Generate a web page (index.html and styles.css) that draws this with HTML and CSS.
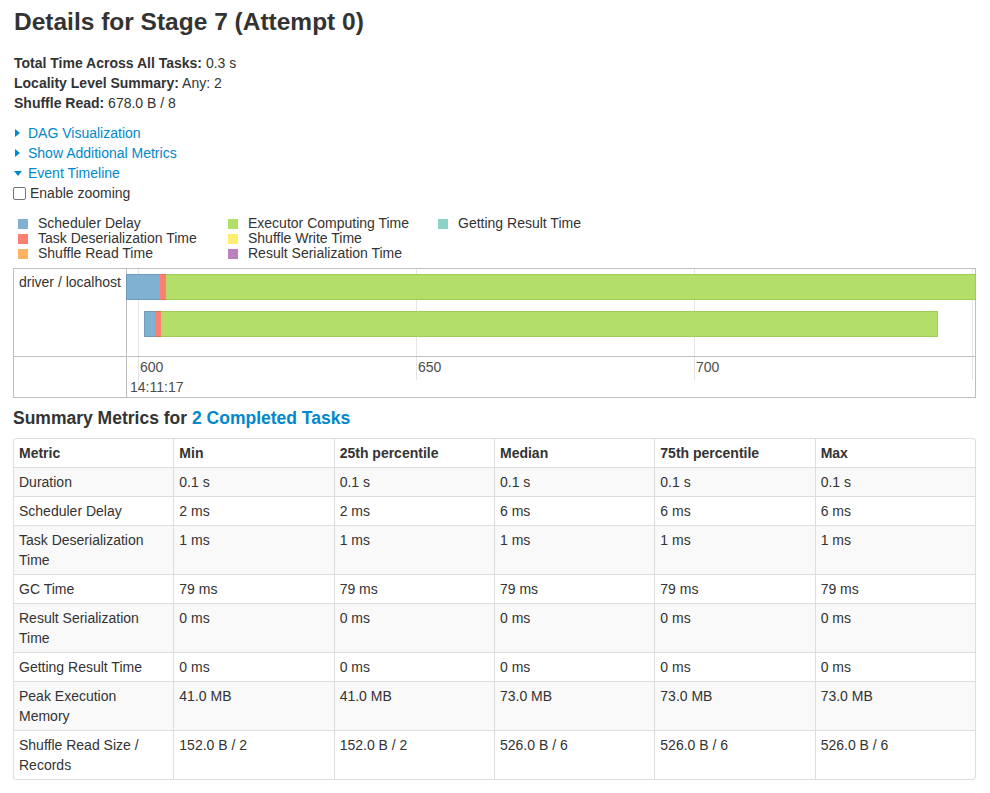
FILE: index.html
```html
<!DOCTYPE html>
<html>
<head>
<meta charset="utf-8">
<link rel="stylesheet" href="styles.css">
</head>
<body>
<div class="page">
  <h3 class="title">Details for Stage 7 (Attempt 0)</h3>
  <ul class="summary">
    <li><strong>Total Time Across All Tasks:</strong> 0.3 s</li>
    <li><strong>Locality Level Summary:</strong> Any: 2</li>
    <li><strong>Shuffle Read:</strong> 678.0 B / 8</li>
  </ul>
  <div class="toggles">
    <a class="toggle"><span class="arrow-right"></span>DAG Visualization</a>
    <a class="toggle"><span class="arrow-right"></span>Show Additional Metrics</a>
    <a class="toggle"><span class="arrow-down"></span>Event Timeline</a>
    <label class="zoom"><span class="checkbox"></span>Enable zooming</label>
  </div>
  <div class="legend">
    <div class="legend-col">
      <div class="legend-item"><span class="sw sched"></span>Scheduler Delay</div>
      <div class="legend-item"><span class="sw deser"></span>Task Deserialization Time</div>
      <div class="legend-item"><span class="sw sread"></span>Shuffle Read Time</div>
    </div>
    <div class="legend-col">
      <div class="legend-item"><span class="sw exec"></span>Executor Computing Time</div>
      <div class="legend-item"><span class="sw swrite"></span>Shuffle Write Time</div>
      <div class="legend-item"><span class="sw rser"></span>Result Serialization Time</div>
    </div>
    <div class="legend-col">
      <div class="legend-item"><span class="sw getres"></span>Getting Result Time</div>
    </div>
  </div>
  <div class="timeline">
    <div class="tl-labels">
      <div class="tl-group-label">driver / localhost</div>
      <div class="tl-axis-label"></div>
    </div>
    <div class="tl-main">
      <div class="tl-center">
        <span class="grid major" style="left:11px"></span>
        <span class="grid" style="left:289px"></span>
        <span class="grid" style="left:567px"></span>
        <span class="grid" style="left:845px"></span>
        <div class="bar" style="left:-1px;top:5px;width:850px">
          <span class="seg sched" style="width:34px"></span><span class="seg deser" style="width:6px"></span><span class="seg exec fill"></span>
        </div>
        <div class="bar" style="left:17px;top:42px;width:794px">
          <span class="seg sched" style="width:11px"></span><span class="seg deser" style="width:6px"></span><span class="seg exec fill"></span>
        </div>
      </div>
      <div class="tl-axis">
        <span class="grid major" style="left:11px"></span>
        <span class="grid" style="left:289px"></span>
        <span class="grid" style="left:567px"></span>
        <span class="grid" style="left:845px"></span>
        <span class="tick" style="left:13px">600</span>
        <span class="tick" style="left:291px">650</span>
        <span class="tick" style="left:569px">700</span>
        <span class="tick major-tick" style="left:3px">14:11:17</span>
      </div>
    </div>
  </div>
  <h4 class="metrics-title">Summary Metrics for <a>2 Completed Tasks</a></h4>
  <table class="metrics">
    <thead>
      <tr><th>Metric</th><th>Min</th><th>25th percentile</th><th>Median</th><th>75th percentile</th><th>Max</th></tr>
    </thead>
    <tbody>
      <tr><td>Duration</td><td>0.1 s</td><td>0.1 s</td><td>0.1 s</td><td>0.1 s</td><td>0.1 s</td></tr>
      <tr><td>Scheduler Delay</td><td>2 ms</td><td>2 ms</td><td>6 ms</td><td>6 ms</td><td>6 ms</td></tr>
      <tr><td>Task Deserialization Time</td><td>1 ms</td><td>1 ms</td><td>1 ms</td><td>1 ms</td><td>1 ms</td></tr>
      <tr><td>GC Time</td><td>79 ms</td><td>79 ms</td><td>79 ms</td><td>79 ms</td><td>79 ms</td></tr>
      <tr><td>Result Serialization Time</td><td>0 ms</td><td>0 ms</td><td>0 ms</td><td>0 ms</td><td>0 ms</td></tr>
      <tr><td>Getting Result Time</td><td>0 ms</td><td>0 ms</td><td>0 ms</td><td>0 ms</td><td>0 ms</td></tr>
      <tr><td>Peak Execution Memory</td><td>41.0 MB</td><td>41.0 MB</td><td>73.0 MB</td><td>73.0 MB</td><td>73.0 MB</td></tr>
      <tr><td>Shuffle Read Size / Records</td><td>152.0 B / 2</td><td>152.0 B / 2</td><td>526.0 B / 6</td><td>526.0 B / 6</td><td>526.0 B / 6</td></tr>
    </tbody>
  </table>
</div>
</body>
</html>
```

FILE: styles.css
```css
* { box-sizing: border-box; }
html, body { margin: 0; padding: 0; background: #fff; }
body {
  font-family: "Liberation Sans", Arial, Helvetica, sans-serif;
  font-size: 14px;
  line-height: 20px;
  color: #333;
}
.page { padding: 0 14px 0 13px; }
.title {
  margin: 8px 0 17px 1px;
  font-size: 24.5px;
  line-height: 28px;
  font-weight: bold;
  color: #333;
}
.summary { list-style: none; margin: 0 0 10px 1px; padding: 0; }
.summary strong { color: #333; }
.toggles { display: flex; flex-direction: column; align-items: flex-start; }
.toggle {
  color: #0088cc;
  display: flex;
  align-items: center;
  line-height: 20px;
  cursor: pointer;
}
.arrow-right {
  width: 0; height: 0;
  border-top: 4px solid transparent;
  border-bottom: 4px solid transparent;
  border-left: 5px solid #0088cc;
  margin: 0 8px 0 2px;
}
.arrow-down {
  width: 0; height: 0;
  border-left: 4px solid transparent;
  border-right: 4px solid transparent;
  border-top: 5px solid #0088cc;
  margin: 1px 6px 0 1px;
}
.zoom { display: flex; align-items: center; line-height: 20px; }
.checkbox {
  width: 13px; height: 13px;
  border: 1px solid #767676;
  border-radius: 2px;
  background: #fff;
  margin: 1px 4px 0 0;
}
.legend {
  display: flex;
  margin: 13px 0 7px 5px;
  line-height: 15px;
}
.legend-col { width: 210px; }
.legend-item { display: flex; align-items: center; }
.sw { width: 10px; height: 10px; margin-right: 10px; display: inline-block; }
.sched { background: #80B1D3; }
.deser { background: #FB8072; }
.sread { background: #FDB462; }
.exec { background: #B3DE69; }
.swrite { background: #FFED6F; }
.rser { background: #BC80BD; }
.getres { background: #8DD3C7; }

.timeline {
  display: flex;
  border: 1px solid #bfbfbf;
  height: 130px;
}
.tl-labels {
  width: 113px;
  border-right: 1px solid #bfbfbf;
  display: flex;
  flex-direction: column;
}
.tl-group-label {
  height: 88px;
  border-bottom: 1px solid #bfbfbf;
  padding: 3px 5px;
}
.tl-main { flex: 1; display: flex; flex-direction: column; }
.tl-center {
  position: relative;
  height: 88px;
  border-bottom: 1px solid #bfbfbf;
}
.tl-axis { position: relative; flex: 1; }
.grid {
  position: absolute;
  top: 0; bottom: 0;
  width: 1px;
  background: #e5e5e5;
}
.tl-axis .grid { bottom: 17px; }
.tl-axis .grid.major { bottom: 6px; }
.bar {
  position: absolute;
  height: 26px;
  display: flex;
}
.seg { height: 100%; border-top: 1px solid rgba(0,0,0,0.12); border-bottom: 1px solid rgba(0,0,0,0.12); }
.seg.sched { border-left: 1px solid #6f9cbd; border-color: #6f9cbd; }
.seg.deser { border-color: #e7705f; }
.seg.exec { border-color: #9fcc55; border-right: 1px solid #9fcc55; }
.fill { flex: 1; }
.tick {
  position: absolute;
  top: 0;
  line-height: 20px;
  color: #4d4d4d;
}
.major-tick { top: 20px; }

.metrics-title {
  margin: 10px 0 9px 0;
  font-size: 17.5px;
  line-height: 21px;
  font-weight: bold;
}
.metrics-title a { color: #0088cc; }
.metrics {
  width: 100%;
  table-layout: fixed;
  border-collapse: separate;
  border-spacing: 0;
  border: 1px solid #ddd;
  border-left: 0;
  border-radius: 4px;
}
.metrics th, .metrics td {
  text-align: left;
  vertical-align: top;
  padding: 4px 5px;
  line-height: 20px;
  border-left: 1px solid #ddd;
  border-top: 1px solid #ddd;
}
.metrics thead th { border-top: 0; font-weight: bold; }
.metrics tbody tr:nth-child(odd) td { background: #f9f9f9; }
```
